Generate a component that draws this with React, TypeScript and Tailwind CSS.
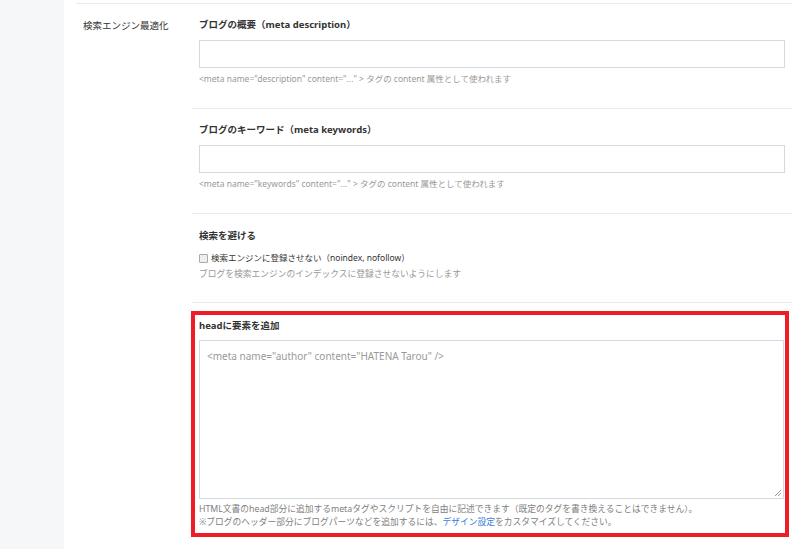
import React from "react";

const font = { fontFamily: '"Noto Sans", "Noto Sans CJK JP", sans-serif' };

const Section: React.FC<{ title: string; children: React.ReactNode; className?: string }> = ({
  title,
  children,
  className,
}) => (
  <div className={"border-b border-[#e6eaed] px-[7px] " + (className || "")}>
    <h3 className="text-[9.5px] font-bold leading-[18px] text-[#333]">{title}</h3>
    {children}
  </div>
);

const App: React.FC = () => {
  return (
    <div className="flex h-[549px] w-[800px] overflow-hidden bg-white" style={font}>
      <div className="w-[64px] shrink-0 bg-[#f6f7f9]" />
      <div className="ml-[12px] mr-[8px] flex-1 pt-[3px]">
        <div className="flex border-t border-[#e6eaed]">
          <div className="w-[116px] shrink-0 pl-[7px] pt-[14px] text-[9.5px] leading-[16px] text-[#333]">
            検索エンジン最適化
          </div>
          <div className="flex-1">
            <Section title="ブログの概要（meta description）" className="pt-[12px] pb-[21px]">
              <input
                type="text"
                className="mt-[6px] block h-[28px] w-full border border-[#d3dbe2] bg-white outline-none"
              />
              <p className="mt-[3px] text-[8.5px] leading-[16px] text-[#999]">
                &lt;meta name="description" content="..." &gt; タグの content 属性として使われます
              </p>
            </Section>
            <Section title="ブログのキーワード（meta keywords）" className="pt-[12px] pb-[21px]">
              <input
                type="text"
                className="mt-[6px] block h-[28px] w-full border border-[#d3dbe2] bg-white outline-none"
              />
              <p className="mt-[3px] text-[8.5px] leading-[16px] text-[#999]">
                &lt;meta name="keywords" content="..." &gt; タグの content 属性として使われます
              </p>
            </Section>
            <Section title="検索を避ける" className="pt-[13px] pb-[20px]">
              <label className="mt-[5px] flex items-center gap-[3px] text-[8.5px] leading-[16px] text-[#333]">
                <span className="inline-block h-[9px] w-[9px] rounded-[1px] border border-[#a9a9a9] bg-[#eeeeee]" />
                <span>検索エンジンに登録させない（noindex, nofollow）</span>
              </label>
              <p className="text-[8.75px] leading-[16px] text-[#999]">
                ブログを検索エンジンのインデックスに登録させないようにします
              </p>
            </Section>
            <div className="mt-[8px] ml-[-1px] w-[598px] border-[4px] border-[#ee1c25] pl-[4px] pt-[2px] pb-[4px]">
              <h3 className="text-[9.5px] font-bold leading-[18px] text-[#333]">headに要素を追加</h3>
              <div className="relative mt-[5px] h-[159px] w-[585px] border border-[#d3dbe2] bg-white px-[7px] pt-[6px] text-[10px] leading-[18px] text-[#999]">
                &lt;meta name="author" content="HATENA Tarou" /&gt;
                <svg className="absolute bottom-[1px] right-[1px]" width="8" height="8" viewBox="0 0 8 8">
                  <path d="M7 1L1 7M7 4L4 7" stroke="#999" strokeWidth="1" />
                </svg>
              </div>
              <p className="mt-[4px] text-[8.75px] leading-[13px] text-[#808080]">
                HTML文書のhead部分に追加するmetaタグやスクリプトを自由に記述できます（既定のタグを書き換えることはできません）。
              </p>
              <p className="text-[8.75px] leading-[13px] text-[#808080]">
                ※ブログのヘッダー部分にブログパーツなどを追加するには、
                <a className="text-[#3b7dd8]">デザイン設定</a>
                をカスタマイズしてください。
              </p>
            </div>
          </div>
        </div>
      </div>
    </div>
  );
};

export default App;
